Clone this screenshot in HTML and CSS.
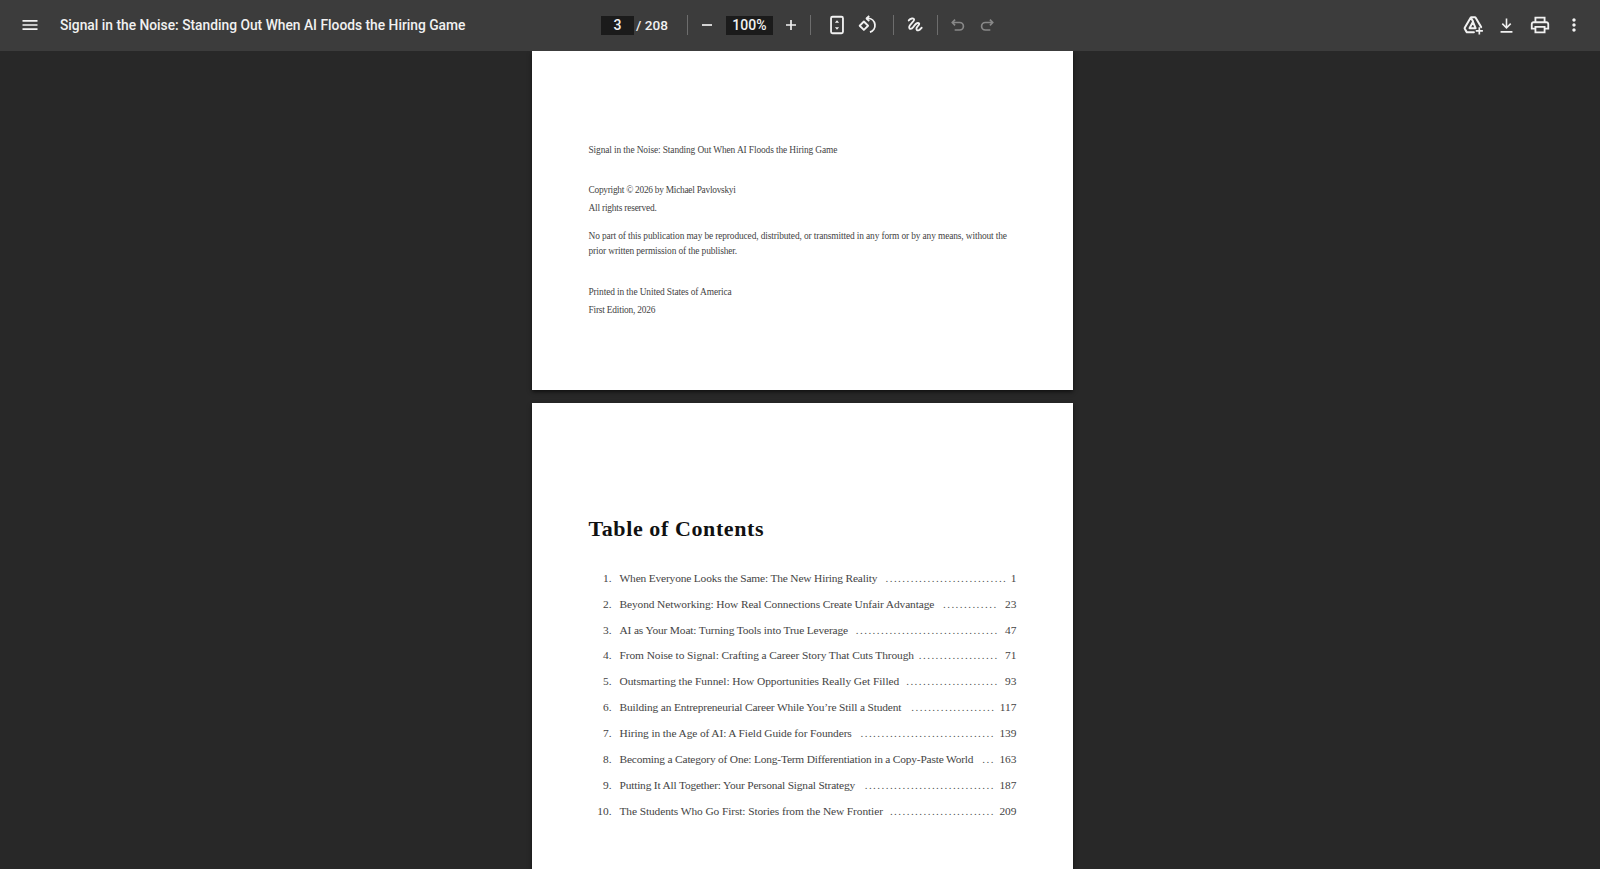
FILE: index.html
```html
<!DOCTYPE html>
<html lang="en">
<head>
<meta charset="utf-8">
<title>Signal in the Noise</title>
<link rel="stylesheet" href="styles.css">
</head>
<body>
<header class="toolbar">
  <div class="tb-left">
    <svg class="icon menu" viewBox="0 0 24 24"><path d="M3 18h18v-2H3v2zm0-5h18v-2H3v2zm0-7v2h18V6H3z"/></svg>
    <span class="doc-title">Signal in the Noise: Standing Out When AI Floods the Hiring Game</span>
  </div>
  <div class="tb-center">
    <span class="field page-field">3</span>
    <span class="page-total">/ 208</span>
    <i class="sep sep-a"></i>
    <svg class="icon zoom-out" viewBox="0 0 24 24"><path d="M6 11h12v2H6z"/></svg>
    <span class="field zoom-field">100%</span>
    <svg class="icon zoom-in" viewBox="0 0 24 24"><path d="M11 6h2v5h5v2h-5v5h-2v-5H6v-2h5z"/></svg>
    <i class="sep sep-b"></i>
    <svg class="icon fit" viewBox="0 0 24 24"><rect x="5.500" y="3" width="13" height="18" rx="1.600" class="ln"/><path d="M12 6.800l2.300 2.700H9.700zM12 17.200l-2.300-2.700h4.600z"/></svg>
    <svg class="icon rotate" viewBox="0 0 24 24"><path class="ln" d="M8.600 8.200l4.600 4.600-4.600 4.600L4 12.800zM11.500 4.800h1.700a7.600 7.600 0 0 1 2 14.900"/><path class="ln" d="M14.400 2.200L11.500 4.900l2.900 2.800"/></svg>
    <i class="sep sep-c"></i>
    <svg class="icon annot" viewBox="0 0 24 24"><path class="ln annot-ln" d="M4.500 6.500c2-2.500 6-3.200 6.500-1.200.5 2-6 6-6 9.500 0 2.500 3 2.500 5-.5 2-3 4.500-5.500 6.500-4.500 2 1-1.500 3.500-2.500 5.500-1 2 .5 3.700 2.500 3 1.500-.5 2.500-2 3.500-3"/></svg>
    <i class="sep sep-d"></i>
    <svg class="icon undo off" viewBox="0 0 24 24"><path class="ln" d="M8.500 5.500L5 9l3.500 3.500M5 9h9a4.500 4.500 0 0 1 0 9H8"/></svg>
    <svg class="icon redo off" viewBox="0 0 24 24"><path class="ln" d="M15.500 5.500L19 9l-3.500 3.500M19 9h-9a4.500 4.500 0 0 0 0 9h6"/></svg>
  </div>
  <div class="tb-right">
    <svg class="icon drive" viewBox="0 0 24 24"><path class="ln annot-ln" d="M10 3.500h4a1 1 0 0 1 .9.5l6 10.300M9.400 4L3 15a1 1 0 0 0 0 1l2 3.500a1 1 0 0 0 .9.5H13M9.600 4L12 8M12 8.500l-3.800 7h6.600z"/><path d="M18 14.500h1.800v3h3v1.800h-3v3H18v-3h-3v-1.800h3z"/></svg>
    <svg class="icon download" viewBox="0 0 24 24"><path d="M11 3h2v9.500l3.600-3.600L18 10.300l-6 6-6-6 1.400-1.400 3.600 3.600zM4.500 19h15v2h-15z"/></svg>
    <svg class="icon print" viewBox="0 0 24 24"><path fill-rule="evenodd" d="M6 3h12v5h1c1.700 0 3 1.300 3 3v6h-4v4H6v-4H2v-6c0-1.700 1.300-3 3-3h1zm2 2v3h8V5zm-3 5c-.6 0-1 .4-1 1v4h2v-2h12v2h2v-4c0-.6-.4-1-1-1zm3 5v4h8v-4z"/></svg>
    <svg class="icon more" viewBox="0 0 24 24"><path d="M12 8c1.100 0 2-.9 2-2s-.9-2-2-2-2 .9-2 2 .9 2 2 2zm0 2c-1.100 0-2 .9-2 2s.9 2 2 2 2-.9 2-2-.9-2-2-2zm0 6c-1.100 0-2 .9-2 2s.9 2 2 2 2-.9 2-2-.9-2-2-2z"/></svg>
  </div>
</header>
<main class="viewer">
  <section class="page page-one">
    <p class="imprint title-line">Signal in the Noise: Standing Out When AI Floods the Hiring Game</p>
    <p class="imprint copyright">Copyright © 2026 by Michael Pavlovskyi</p>
    <p class="imprint rights">All rights reserved.</p>
    <p class="imprint notice">No part of this publication may be reproduced, distributed, or transmitted in any form or by any means, without the prior written permission of the publisher.</p>
    <p class="imprint printed">Printed in the United States of America</p>
    <p class="imprint rights">First Edition, 2026</p>
  </section>
  <section class="page page-two">
    <h1 class="toc-title">Table of Contents</h1>
    <ol class="toc">
      <li class="row"><span class="num">1.</span><span class="name">When Everyone Looks the Same: The New Hiring Reality</span><span class="dots">.............................</span><span class="pg">1</span></li>
      <li class="row"><span class="num">2.</span><span class="name">Beyond Networking: How Real Connections Create Unfair Advantage</span><span class="dots">.............</span><span class="pg">23</span></li>
      <li class="row"><span class="num">3.</span><span class="name">AI as Your Moat: Turning Tools into True Leverage</span><span class="dots">..................................</span><span class="pg">47</span></li>
      <li class="row"><span class="num">4.</span><span class="name">From Noise to Signal: Crafting a Career Story That Cuts Through</span><span class="dots">...................</span><span class="pg">71</span></li>
      <li class="row"><span class="num">5.</span><span class="name">Outsmarting the Funnel: How Opportunities Really Get Filled</span><span class="dots">......................</span><span class="pg">93</span></li>
      <li class="row"><span class="num">6.</span><span class="name">Building an Entrepreneurial Career While You’re Still a Student</span><span class="dots">....................</span><span class="pg">117</span></li>
      <li class="row"><span class="num">7.</span><span class="name">Hiring in the Age of AI: A Field Guide for Founders</span><span class="dots">................................</span><span class="pg">139</span></li>
      <li class="row"><span class="num">8.</span><span class="name">Becoming a Category of One: Long-Term Differentiation in a Copy-Paste World</span><span class="dots">...</span><span class="pg">163</span></li>
      <li class="row"><span class="num">9.</span><span class="name">Putting It All Together: Your Personal Signal Strategy</span><span class="dots">...............................</span><span class="pg">187</span></li>
      <li class="row"><span class="num">10.</span><span class="name">The Students Who Go First: Stories from the New Frontier</span><span class="dots">.........................</span><span class="pg">209</span></li>
    </ol>
  </section>
</main>
</body>
</html>
```
FILE: styles.css
```css
* { box-sizing: border-box; }
html, body { margin: 0; height: 100%; overflow: hidden; }
body { display: flex; flex-direction: column; height: 869px; background: #282828; }

.toolbar {
  height: 51px; flex: none; display: flex; align-items: center; padding-bottom: 1px;
  background: #3c3c3c; color: #f1f1f1;
  font-family: Roboto, "Liberation Sans", sans-serif;
}
.tb-left { display: flex; align-items: center; width: 601px; flex: none; padding-left: 20px; }
.tb-center { display: flex; align-items: center; flex: none; }
.tb-right { display: flex; align-items: center; margin-left: auto; padding-right: 16px; }

.icon { display: block; width: 24px; height: 24px; fill: #f1f1f1; flex: none; }
.ln { fill: none; stroke: #f1f1f1; stroke-width: 2; stroke-linejoin: round; }
.annot-ln { stroke-width: 2.2; stroke-linecap: round; }
.off { opacity: .42; }
.menu { width: 20px; height: 20px; }
.doc-title { margin-left: 20px; font-size: 13.8px; font-weight: 500; white-space: nowrap; }

.field { display: flex; align-items: center; justify-content: center; height: 19px; background: #1b1b1b; font-size: 14px; font-weight: 500; }
.page-field { width: 33px; }
.page-total { margin-left: 2px; font-size: 13.6px; font-weight: 500; white-space: nowrap; }
.sep { display: block; width: 1px; height: 20px; background: #6d6d6d; flex: none; }
.sep-a { margin-left: 19px; }
.zoom-out { width: 20px; height: 20px; margin-left: 9px; }
.zoom-field { width: 47px; margin-left: 9px; }
.zoom-in { width: 20px; height: 20px; margin-left: 8px; }
.sep-b { margin-left: 9px; }
.fit { width: 22px; height: 22px; margin-left: 15px; }
.rotate { width: 22px; height: 22px; margin-left: 8px; }
.sep-c { margin-left: 15px; }
.annot { width: 20px; height: 20px; margin-left: 11px; }
.sep-d { margin-left: 12px; }
.undo { width: 20px; height: 20px; margin-left: 10px; }
.redo { width: 20px; height: 20px; margin-left: 9px; }

.drive { width: 22px; height: 22px; }
.download { width: 19px; height: 19px; margin-left: 13px; }
.print { width: 22px; height: 22px; margin-left: 13px; }
.more { width: 20px; height: 20px; margin-left: 13px; }

.viewer { flex: 1; min-height: 0; overflow: hidden; display: flex; flex-direction: column; align-items: center; gap: 13px; padding-left: 4px; }
.page { width: 541px; background: #fff; flex: none; box-shadow: 0 2px 4px rgba(0,0,0,.6); padding-left: 57px; padding-right: 56px; color: #444; font-family: "Liberation Serif", "Times New Roman", serif; }
.page-one { height: 339px; padding-top: 92px; }
.page-two { height: 480px; padding-top: 113px; }

.imprint { margin: 0; font-size: 9.4px; line-height: 15px; letter-spacing: -.11px; }
.copyright { margin-top: 25px; letter-spacing: -.27px; }
.rights { margin-top: 3px; letter-spacing: -.2px; }
.notice { margin-top: 13px; letter-spacing: -.12px; }
.printed { margin-top: 26px; }

.toc-title { margin: 0; font-size: 22px; line-height: 26px; font-weight: 700; color: #111; letter-spacing: .6px; }
.toc { list-style: none; margin: 23px 0 0 -1px; padding: 0; font-size: 11.4px; }
.row { display: flex; height: 25.85px; align-items: center; white-space: nowrap; }
.num { width: 24px; text-align: right; flex: none; }
.name { margin-left: 8px; flex: none; letter-spacing: -.18px; }
.row:nth-child(1) .name { letter-spacing: -.16px; }
.row:nth-child(2) .name { letter-spacing: -.1px; }
.row:nth-child(3) .name { letter-spacing: -.14px; }
.row:nth-child(4) .name { letter-spacing: -.08px; }
.row:nth-child(5) .name { letter-spacing: -.06px; }
.row:nth-child(6) .name { letter-spacing: -.16px; }
.row:nth-child(7) .name { letter-spacing: -.1px; }
.row:nth-child(10) .name { letter-spacing: -.09px; }
.dots { margin-left: auto; margin-right: 4.5px; letter-spacing: 1.45px; font-size: 11px; color: #555; flex: none; }
.row:nth-child(1) .dots { margin-right: 3.5px; }
.row:nth-child(2) .dots { margin-right: 7.5px; }
.row:nth-child(3) .dots, .row:nth-child(4) .dots, .row:nth-child(5) .dots { margin-right: 6.5px; }
.pg { flex: none; }
```
